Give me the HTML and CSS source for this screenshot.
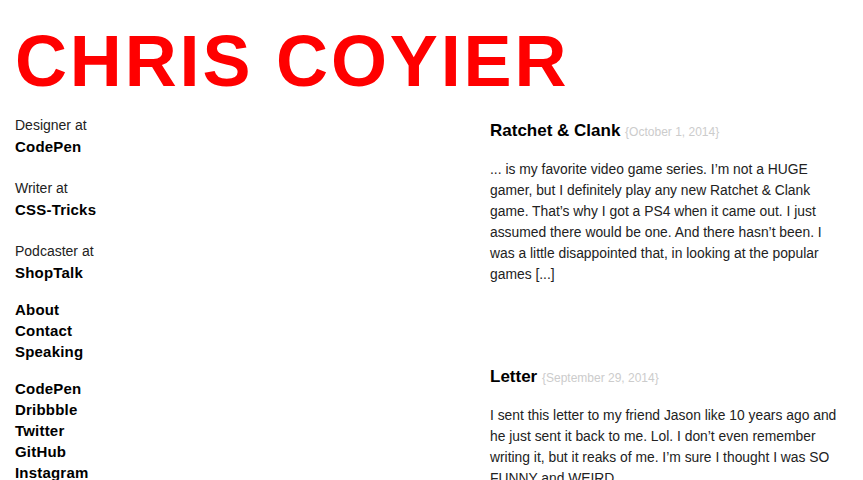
FILE: index.html
```html
<!DOCTYPE html>
<html lang="en">
<head>
<meta charset="utf-8">
<title>Chris Coyier</title>
<link rel="stylesheet" href="styles.css">
</head>
<body>
<header class="site-header">
  <h1 class="site-title">CHRIS COYIER</h1>
</header>
<div class="layout">
  <aside class="sidebar">
    <div class="role"><span class="role-label">Designer at</span><a class="role-link" href="#">CodePen</a></div>
    <div class="role"><span class="role-label">Writer at</span><a class="role-link" href="#">CSS-Tricks</a></div>
    <div class="role"><span class="role-label">Podcaster at</span><a class="role-link" href="#">ShopTalk</a></div>
    <nav class="nav-group">
      <a href="#">About</a>
      <a href="#">Contact</a>
      <a href="#">Speaking</a>
    </nav>
    <nav class="nav-group">
      <a href="#">CodePen</a>
      <a href="#">Dribbble</a>
      <a href="#">Twitter</a>
      <a href="#">GitHub</a>
      <a href="#">Instagram</a>
    </nav>
  </aside>
  <main class="posts">
    <article class="post">
      <h2 class="post-title"><a href="#">Ratchet &amp; Clank</a> <span class="post-date">{October 1, 2014}</span></h2>
      <p class="post-excerpt">... is my favorite video game series. I’m not a HUGE<br>gamer, but I definitely play any new Ratchet &amp; Clank<br>game. That’s why I got a PS4 when it came out. I just<br>assumed there would be one. And there hasn’t been. I<br>was a little disappointed that, in looking at the popular<br>games [...]</p>
    </article>
    <article class="post">
      <h2 class="post-title"><a href="#">Letter</a> <span class="post-date">{September 29, 2014}</span></h2>
      <p class="post-excerpt">I sent this letter to my friend Jason like 10 years ago and<br>he just sent it back to me. Lol. I don’t even remember<br>writing it, but it reaks of me. I’m sure I thought I was SO<br>FUNNY and WEIRD.</p>
    </article>
  </main>
</div>
</body>
</html>
```
FILE: styles.css
```css
html, body {
  margin: 0;
  padding: 0;
  background: #fff;
}
body {
  font-family: "Liberation Sans", Arial, sans-serif;
  color: #222;
  font-size: 14px;
  line-height: 21px;
}
a {
  color: #000;
  text-decoration: none;
  font-weight: bold;
}
.site-header {
  padding: 25px 0 0 15px;
}
.site-title {
  margin: 0;
  font-size: 72px;
  line-height: 72px;
  font-weight: bold;
  color: #ff0000;
  letter-spacing: 2.85px;
}
.layout {
  display: flex;
  padding: 18px 0 0 15px;
}
.sidebar {
  width: 475px;
  flex: none;
  display: flex;
  flex-direction: column;
}
.role {
  display: flex;
  flex-direction: column;
  margin-bottom: 21px;
}
.role:last-of-type {
  margin-bottom: 16px;
}
.role-label {
  font-size: 14px;
}
.role-link, .nav-group a {
  font-size: 15px;
  letter-spacing: 0.2px;
}
.nav-group {
  display: flex;
  flex-direction: column;
  margin-bottom: 16px;
}
.posts {
  flex: 1;
  padding-top: 5px;
  padding-right: 20px;
}
.post {
  margin-bottom: 81px;
}
.post-title {
  margin: 0 0 16px;
  font-size: 17px;
  line-height: 21px;
}
.post-title a {
  color: #000;
}
.post-date {
  font-size: 12px;
  font-weight: normal;
  color: #ccc;
}
.post-excerpt {
  margin: 0;
  font-size: 13.85px;
  line-height: 21px;
}
```
